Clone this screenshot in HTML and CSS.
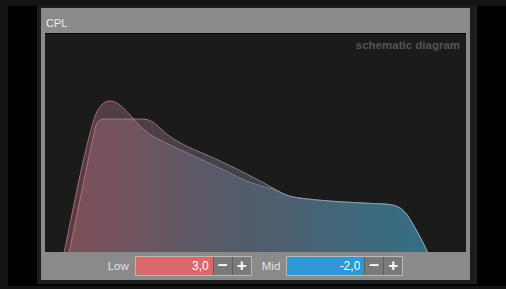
FILE: index.html
```html
<!DOCTYPE html>
<html lang="en">
<head>
  <meta charset="UTF-8">
  <title>CPL</title>
  <link rel="stylesheet" href="styles.css">
</head>
<body>
  <div class="stage">
    <div class="frame">
      <div class="panel">
        <div class="title">CPL</div>
        <div class="chart">
          <span class="watermark">schematic diagram</span>
          <svg class="curves" viewBox="45 34 421 218" preserveAspectRatio="none">
            <defs>
              <linearGradient id="fillGrad" gradientUnits="userSpaceOnUse" x1="60" y1="0" x2="430" y2="0">
                <stop offset="0" stop-color="rgb(185,108,122)"/>
                <stop offset="0.5" stop-color="rgb(112,128,150)"/>
                <stop offset="1" stop-color="rgb(68,158,194)"/>
              </linearGradient>
              <linearGradient id="lineGrad" gradientUnits="userSpaceOnUse" x1="60" y1="0" x2="430" y2="0">
                <stop offset="0" stop-color="rgb(210,125,140)"/>
                <stop offset="1" stop-color="rgb(150,170,180)"/>
              </linearGradient>
            </defs>
            <!-- low shelf (peaked) -->
            <path class="band" d="M64 253 C72 215, 84 150, 95 116 C100 104, 105 101, 110 101 C117 101, 124 108, 132 117 C140 127, 148 134, 160 140 C180 150, 210 163, 240 178 C255 185, 265 187, 273 189 C285 195, 290 197, 300 198 C320 201, 360 203, 385 204 C398 205, 402 208, 408 216 C415 227, 422 240, 428 253 Z"/>
            <!-- mid band (flat top) -->
            <path class="band" d="M69 253 C78 210, 88 160, 95 128 C97 121, 100 119, 104 119 L143 119 C150 119, 155 123, 162 130 C175 142, 190 148, 207 155 C230 165, 255 178, 273 188 C285 195, 290 197, 300 198 C320 201, 360 203, 385 204 C398 205, 402 208, 408 216 C415 227, 422 240, 428 253 Z"/>
          </svg>
        </div>
        <div class="controls">
          <span class="ctl-label">Low</span>
          <div class="spin">
            <input class="value low" type="text" value="3,0">
            <button class="step">−</button>
            <button class="step">+</button>
          </div>
          <span class="ctl-label">Mid</span>
          <div class="spin">
            <input class="value mid" type="text" value="-2,0">
            <button class="step">−</button>
            <button class="step">+</button>
          </div>
        </div>
      </div>
    </div>
  </div>
</body>
</html>
```

FILE: styles.css
```css
body { margin: 0; background: #141414; font-family: "Liberation Sans", Arial, sans-serif; }
.stage { margin: 6px 0 0 8px; height: 280px; background: #000; display: flex; justify-content: center; }
.frame { width: 440px; height: 278px; box-sizing: border-box; background: #1d1d1d; padding: 2px 7px 4px 4px; }
.panel { background: #8a8a8a; height: 272px; display: flex; flex-direction: column; }
.title { height: 25px; box-sizing: border-box; padding: 9px 0 0 5px; color: #eee; font-size: 11px; line-height: 13px; }
.chart { position: relative; margin: 0 4px; height: 219px; box-sizing: border-box; background: #1c1b1c; border-top: 1px solid #050505; }
.watermark { position: absolute; top: 6px; right: 6px; color: #555; font-size: 11.5px; font-weight: bold; line-height: 11px; }
.curves { display: block; width: 100%; height: 100%; }
.band { fill: url(#fillGrad); fill-opacity: 0.4; stroke: url(#lineGrad); stroke-opacity: 0.7; stroke-width: 1; }
.controls { height: 28px; display: flex; align-items: center; justify-content: center; }
.ctl-label { color: #e2e2e2; font-size: 11.5px; margin-right: 6px; }
.spin { display: flex; height: 20px; box-sizing: border-box; border: 1px solid rgba(255,255,255,0.4); margin-right: 10px; }
.spin:last-child { margin-right: 0; }
.value { width: 77px; height: 18px; box-sizing: border-box; border: none; margin: 0; padding: 0 4px 0 0; text-align: right; color: #fff; font-family: "Liberation Sans", Arial, sans-serif; font-size: 12px; outline: none; }
.low { background: #d9686b; }
.mid { background: #2f97d3; }
.step { width: 19px; height: 18px; margin: 0; padding: 0; border: none; border-left: 1px solid #5c5c5c; background: #7a7a7a; color: #fff; font-family: "Liberation Sans", Arial, sans-serif; font-size: 17px; font-weight: bold; line-height: 18px; }
```
